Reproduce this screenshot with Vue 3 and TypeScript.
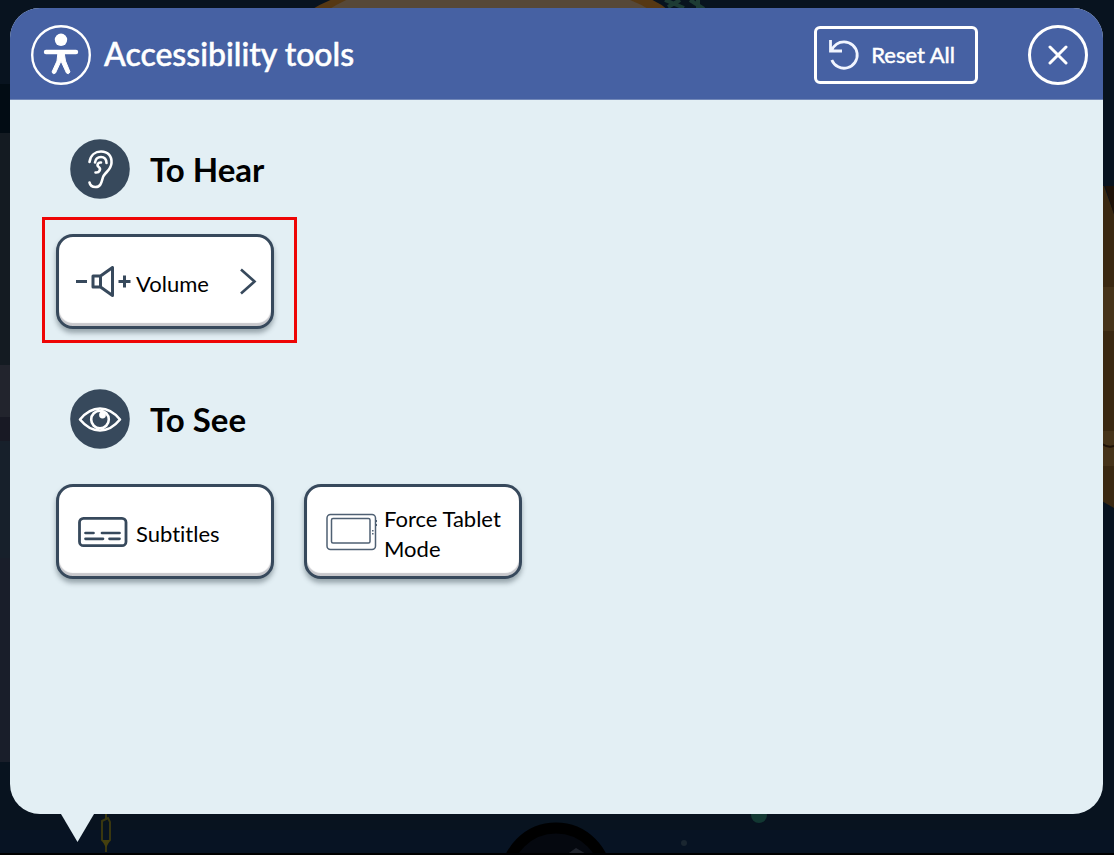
<script setup lang="ts">
import { ref } from 'vue'

interface Tool {
  id: string
  label: string
  opensMenu: boolean
  highlighted: boolean
}

interface Section {
  id: string
  title: string
  tools: Tool[]
}

const sections: Section[] = [
  {
    id: 'hear',
    title: 'To Hear',
    tools: [{ id: 'volume', label: 'Volume', opensMenu: true, highlighted: true }],
  },
  {
    id: 'see',
    title: 'To See',
    tools: [
      { id: 'subtitles', label: 'Subtitles', opensMenu: false, highlighted: false },
      { id: 'tablet', label: 'Force Tablet Mode', opensMenu: false, highlighted: false },
    ],
  },
]

const selected = ref<string[]>([])

function toggle(id: string): void {
  selected.value = selected.value.includes(id)
    ? selected.value.filter((item) => item !== id)
    : [...selected.value, id]
}

function resetAll(): void {
  selected.value = []
}
</script>

<template>
  <div class="stage">
    <svg class="scene" viewBox="0 0 1114 855" preserveAspectRatio="none" aria-hidden="true">
      <rect width="1114" height="855" fill="#08131f" />
      <rect y="84" width="20" height="49" fill="#020c14" />
      <rect y="133" width="20" height="232" fill="#141b22" />
      <rect y="365" width="20" height="52" fill="#22242d" />
      <rect y="417" width="20" height="24" fill="#181924" />
      <rect y="441" width="20" height="117" fill="#17202b" />
      <rect y="558" width="20" height="204" fill="#191e2a" />
      <path d="M311 10 Q325 1 342-4 H642 Q658 1 668 10Z" fill="#563813" />
      <path d="M328 10 Q342 1 356-4 H618 Q636 1 650 10Z" fill="#564838" />
      <path d="M665 0 L684 8 M668 7 L680 0 M690 0 L704 9 M698 0 V8" stroke="#1d3b34" stroke-width="4" />
      <path d="M1100 186 H1104 L1114 214 V508 L1100 500Z" fill="#3a2811" />
      <path d="M1105 186 H1114 V214Z" fill="#1e1107" />
      <path d="M1100 287 H1114 V331 H1100Z M1100 431 H1114 V466 H1100Z" fill="#463319" />
      <path d="M1102 444 Q1108 448 1114 446" fill="none" stroke="#1e1107" stroke-width="2" />
      <rect y="830" width="1114" height="23" fill="#071323" />
      <path d="M106 814 V820 M102 821 L108 818 L110 822 V840 L106 844 L102 840Z M106 842 V852" fill="none" stroke="#39370f" stroke-width="2" />
      <path d="M102 840 H110 L106 848Z" fill="#45400f" />
      <circle cx="759" cy="815" r="8" fill="#123832" />
      <circle cx="684" cy="843" r="3" fill="#1a2630" />
      <circle cx="556" cy="878" r="50" fill="#05080f" stroke="#000" stroke-width="11" />
      <path d="M566 855 L576 848 L588 855Z" fill="#20242d" />
      <rect y="853" width="1114" height="2" fill="#000" />
    </svg>

    <main class="panel">
      <header class="bar">
        <svg class="logo" viewBox="0 0 60 60" aria-hidden="true">
          <circle cx="30" cy="30" r="28.8" fill="none" stroke="#fff" stroke-width="2.4" />
          <circle cx="30" cy="14.8" r="6.2" fill="#fff" />
          <path d="M15 27H45" fill="none" stroke="#fff" stroke-width="4.4" stroke-linecap="round" />
          <path d="M27 27H33L34.500 36L39 47Q37.500 50 35.500 48L30 36L24.500 48Q22 50 21 47L26 36Z" fill="#fff" stroke="#fff" stroke-width="1" stroke-linejoin="round" />
        </svg>
        <h1 class="title">Accessibility tools</h1>
        <button class="reset" type="button" @click="resetAll">
          <svg class="reset-icon" viewBox="0 0 32 32" aria-hidden="true">
            <path d="M2.500 1V12H14M3.500 11.500C6 6 10.500 2.800 16 2.800A13.200 13.200 0 1 1 3.800 21" fill="none" stroke="#f1f5ff" stroke-width="2.800" />
          </svg>
          <span>Reset All</span>
        </button>
        <button class="close" type="button" aria-label="Close">
          <svg class="close-icon" viewBox="0 0 20 20" aria-hidden="true">
            <path d="M2 2L18 18M18 2L2 18" stroke="#fff" stroke-width="3" stroke-linecap="round" />
          </svg>
        </button>
      </header>

      <div class="content">
        <section v-for="section in sections" :key="section.id" class="section" :aria-labelledby="section.id">
          <div class="heading">
            <svg v-if="section.id === 'hear'" class="badge" viewBox="0 0 60 60" aria-hidden="true">
              <circle cx="30" cy="30" r="29.800" fill="#37495c" />
              <g fill="none" stroke="#fff" stroke-width="2.600" stroke-linecap="round" stroke-linejoin="round">
                <path d="M19.500 23C20.500 16 25.500 12.500 31 12.500C38 12.500 42 17 41.500 24C41 31 36 32.500 33.500 37C31.500 41 32 48 25.500 48C22 48 20 46 19.500 43.500" />
                <path d="M25 23.500C25.500 20 28 18 31 18C34.500 18 36.500 20.500 36.500 24" />
                <path d="M31 23.500C28 23 26.500 26 28.500 27.800C31.500 30 29.500 34 25.500 33.500" />
              </g>
            </svg>
            <svg v-else class="badge" viewBox="0 0 60 60" aria-hidden="true">
              <circle cx="30" cy="30" r="29.800" fill="#37495c" />
              <path d="M10 30.500Q19 19.500 30 19.500Q41 19.500 50 30.500Q41 41.500 30 41.500Q19 41.500 10 30.500Z" fill="none" stroke="#fff" stroke-width="2.600" stroke-linejoin="round" />
              <circle cx="30" cy="30.500" r="8.800" fill="none" stroke="#fff" stroke-width="2.600" />
              <circle cx="32.500" cy="26" r="3.400" fill="#fff" />
            </svg>
            <h2 :id="section.id" class="section-title">{{ section.title }}</h2>
          </div>

          <div class="cards">
            <div v-for="tool in section.tools" :key="tool.id" class="slot" :class="{ highlighted: tool.highlighted }">
              <button
                class="card"
                type="button"
                :aria-pressed="tool.opensMenu ? undefined : selected.includes(tool.id)"
                :aria-haspopup="tool.opensMenu ? 'menu' : undefined"
                @click="toggle(tool.id)"
              >
                <span class="icon">
                  <svg v-if="tool.id === 'volume'" class="volume-icon" viewBox="0 0 56 32" aria-hidden="true">
                    <g fill="none" stroke="#37495c" stroke-width="3" stroke-linejoin="round">
                      <path d="M1 15.500H12M43.500 15.500H55.500M49.500 9.500V21.500" />
                      <path d="M18 10H25.500L37.500 1.500V29.500L25.500 21H18ZM25.500 10V21" />
                    </g>
                  </svg>
                  <svg v-else-if="tool.id === 'subtitles'" class="subtitles-icon" viewBox="0 0 50 32" aria-hidden="true">
                    <rect x="1.500" y="2.300" width="46.500" height="27.400" rx="4" fill="none" stroke="#37495c" stroke-width="2.800" />
                    <path d="M7.500 17H15.500M24 17H41.500M7.500 22.800H25M31.500 22.800H41.500" stroke="#37495c" stroke-width="2.700" stroke-linecap="round" />
                  </svg>
                  <svg v-else class="tablet-icon" viewBox="0 0 52 38" aria-hidden="true">
                    <rect x="2" y="1.500" width="48.500" height="35" rx="3.500" fill="none" stroke="#4f6073" stroke-width="1.500" />
                    <rect x="6.500" y="5.500" width="38.500" height="24.500" rx="1.500" fill="none" stroke="#4f6073" stroke-width="1.500" />
                    <path d="M47.800 17V18.500M47.800 20V21.500M51.300 7V9M51.300 11V13" stroke="#4f6073" stroke-width="1.500" />
                  </svg>
                </span>
                <span class="label">{{ tool.label }}</span>
                <svg v-if="tool.opensMenu" class="chevron" viewBox="0 0 18 28" aria-hidden="true">
                  <path d="M2 1.500L15.500 13.500L2 25.500" fill="none" stroke="#37495c" stroke-width="2.600" />
                </svg>
              </button>
            </div>
          </div>
        </section>
      </div>
    </main>
  </div>
</template>

<style>
body {
  margin: 0;
  background: #08131f;
}
</style>

<style scoped>
.stage {
  position: relative;
  display: flex;
  box-sizing: border-box;
  min-height: 100vh;
  padding: 8px 11px 41px 10px;
  font-family: "Century Gothic", Lato, sans-serif;
}

.scene {
  position: absolute;
  inset: 0;
  width: 100%;
  height: 100%;
}

.panel {
  position: relative;
  display: flex;
  flex: 1;
  flex-direction: column;
  border-radius: 30px;
  background: #e3eff4;
}

.panel::after {
  position: absolute;
  top: 100%;
  left: 51px;
  width: 33px;
  height: 28px;
  background: #e3eff4;
  clip-path: polygon(0 0, 100% 0, 50% 100%);
  content: "";
}

.bar {
  display: flex;
  align-items: center;
  box-sizing: border-box;
  min-height: 92px;
  padding: 2px 15px 0 21px;
  border-bottom: 1px solid #7288b8;
  border-radius: 30px 30px 0 0;
  background: #4661a3;
  color: #fff;
}

.logo {
  flex: none;
  width: 60px;
  height: 60px;
}

.title {
  flex: 1;
  margin: 0 0 2px 13px;
  font-size: 32px;
  font-weight: 500;
  line-height: 40px;
  -webkit-text-stroke: 0.5px currentColor;
}

.reset,
.close,
.card {
  margin: 0;
  font-family: inherit;
  cursor: pointer;
}

.reset {
  display: flex;
  align-items: center;
  gap: 11px;
  box-sizing: border-box;
  height: 58px;
  padding: 0 20px 0 11px;
  border: 3px solid #fff;
  border-radius: 6px;
  background: transparent;
  color: #fff;
  font-size: 22px;
  line-height: 28px;
  -webkit-text-stroke: 0.5px currentColor;
}

.reset-icon {
  width: 32px;
  height: 32px;
}

.close {
  display: flex;
  flex: none;
  align-items: center;
  justify-content: center;
  box-sizing: border-box;
  width: 60px;
  height: 60px;
  margin-left: 50px;
  padding: 0;
  border: 3px solid #fff;
  border-radius: 50%;
  background: transparent;
}

.close-icon {
  width: 20px;
  height: 20px;
}

.content {
  display: flex;
  flex-direction: column;
  gap: 60px;
  padding: 39px 46px;
}

.section {
  display: flex;
  flex-direction: column;
  gap: 35px;
}

.heading {
  display: flex;
  align-items: center;
  gap: 20px;
  padding-left: 14px;
}

.badge {
  width: 60px;
  height: 60px;
}

.section-title {
  margin: 0;
  color: #000;
  font-size: 33px;
  font-weight: 700;
  line-height: 44px;
}

.cards {
  display: flex;
  flex-wrap: wrap;
  gap: 30px;
}

.slot {
  position: relative;
}

.highlighted::after {
  position: absolute;
  inset: -17px -23px -14px -14px;
  border: 3px solid #ee0505;
  content: "";
  pointer-events: none;
}

.card {
  display: flex;
  align-items: center;
  gap: 5px;
  box-sizing: border-box;
  width: 218px;
  min-height: 95px;
  padding: 0 14px 0 16px;
  border: 3px solid #37495c;
  border-radius: 17px;
  background: #fff;
  box-shadow: inset 0 -3px 1px #c8c8cc, 0 4px 5px rgb(60 75 85 / 45%);
  color: #000;
  font-size: 22px;
  font-variant-ligatures: none;
  line-height: 30px;
  text-align: left;
}

.icon {
  display: flex;
  flex: none;
  align-items: center;
  justify-content: center;
  width: 56px;
}

.volume-icon {
  width: 56px;
  height: 32px;
}

.subtitles-icon {
  width: 50px;
  height: 32px;
}

.tablet-icon {
  width: 52px;
  height: 38px;
}

.label {
  flex: 1;
  padding-top: 4px;
}

.chevron {
  width: 18px;
  height: 28px;
}
</style>
